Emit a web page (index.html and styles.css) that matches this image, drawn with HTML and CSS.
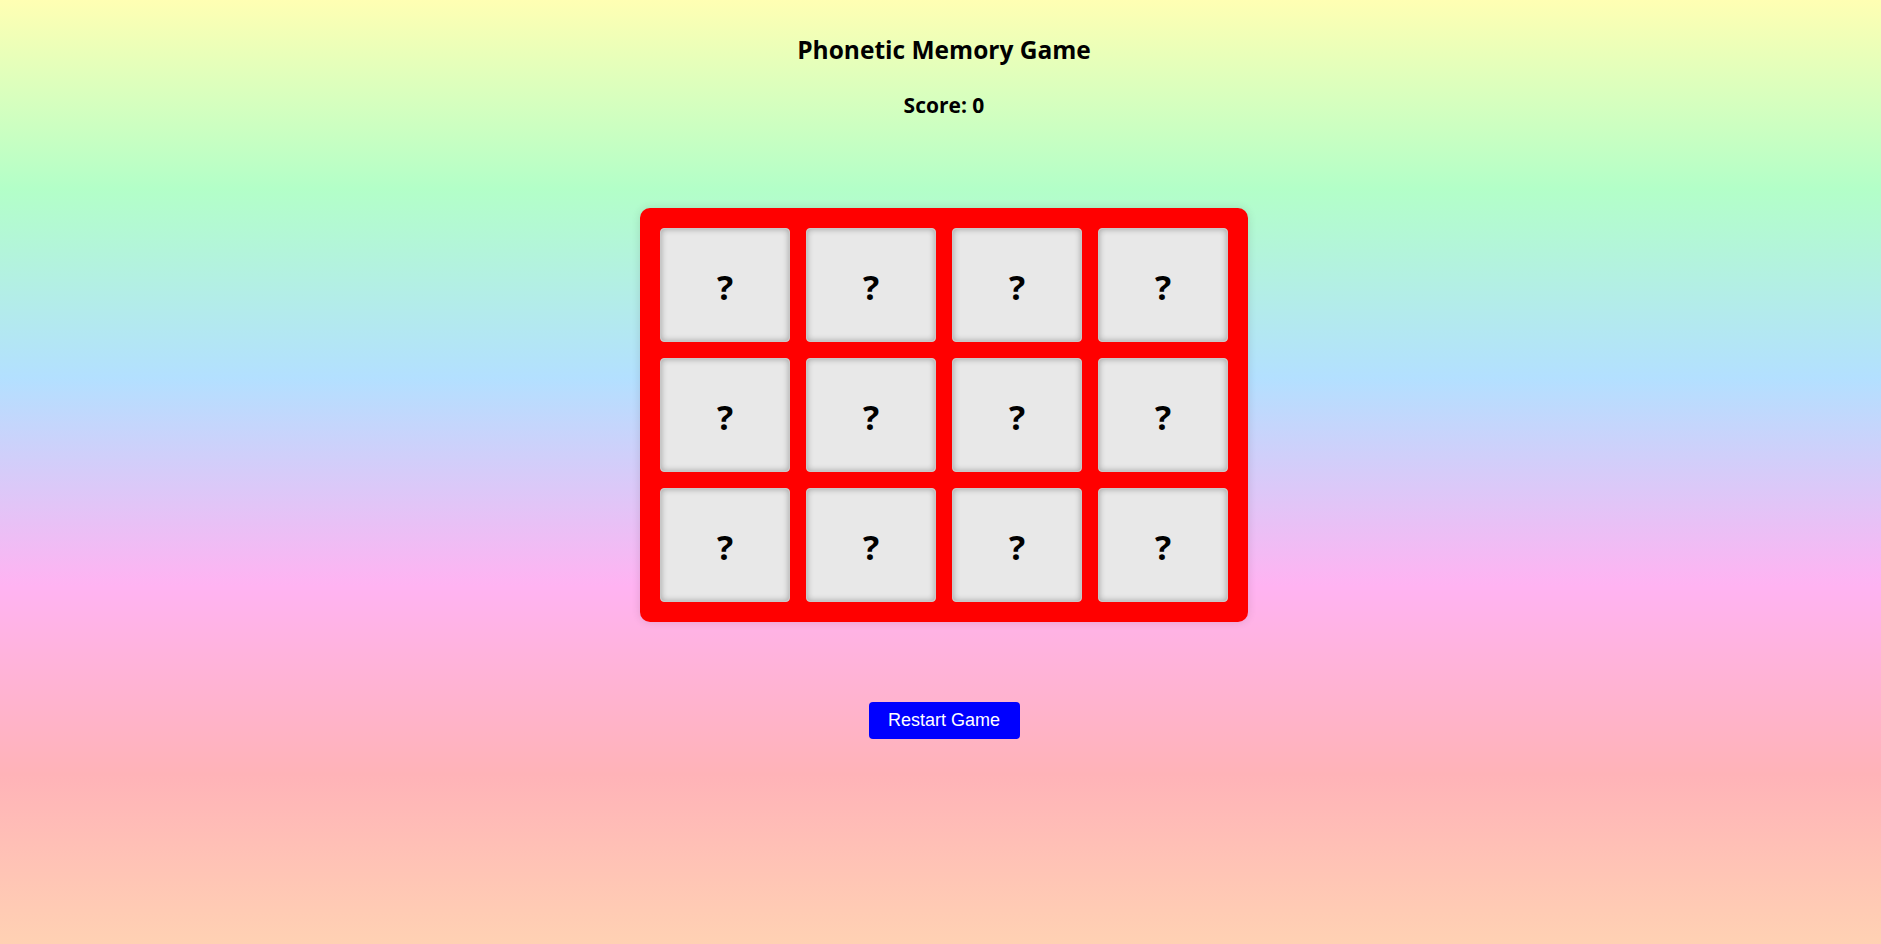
FILE: index.html
```html
<!DOCTYPE html>
<html lang="en">
<head>
<meta charset="utf-8">
<title>Phonetic Memory Game</title>
<link rel="stylesheet" href="styles.css">
</head>
<body>
<main class="game">
  <h1 class="title">Phonetic Memory Game</h1>
  <h2 class="score">Score: 0</h2>
  <div class="board">
    <div class="card">?</div>
    <div class="card">?</div>
    <div class="card">?</div>
    <div class="card">?</div>
    <div class="card">?</div>
    <div class="card">?</div>
    <div class="card">?</div>
    <div class="card">?</div>
    <div class="card">?</div>
    <div class="card">?</div>
    <div class="card">?</div>
    <div class="card">?</div>
  </div>
  <button class="restart" type="button">Restart Game</button>
</main>
</body>
</html>
```

FILE: styles.css
```css
html, body {
  margin: 0;
  padding: 0;
  height: 100%;
}

body {
  font-family: "Open Sans", "Noto Sans", sans-serif;
  color: #000;
  background: linear-gradient(to bottom, #ffffb3 0%, #b3ffc8 20%, #b3e0ff 40%, #ffb3f2 62%, #ffb3b8 82%, #ffd1b3 100%);
  overflow: hidden;
}

.game {
  display: flex;
  flex-direction: column;
  align-items: center;
  padding-left: 7px;
}

.title {
  margin: 34px 0 0;
  font-size: 24.5px;
  font-weight: 700;
  line-height: 32px;
}

.score {
  margin: 26px 0 0;
  font-size: 21px;
  font-weight: 700;
  line-height: 26px;
}

.board {
  margin-top: 90px;
  display: grid;
  grid-template-columns: repeat(4, 130px);
  grid-auto-rows: 114px;
  gap: 16px;
  padding: 20px;
  background: #ff0000;
  border-radius: 10px;
  box-shadow: 0 0 10px rgba(0, 0, 0, 0.12);
}

.card {
  display: flex;
  align-items: center;
  justify-content: center;
  padding-top: 4px;
  background: #e8e8e8;
  border: 1px solid #c8c8c8;
  border-radius: 4px;
  box-shadow: inset 0 0 6px rgba(0, 0, 0, 0.32);
  font-size: 34px;
  font-weight: 700;
  box-sizing: border-box;
}

.restart {
  margin-top: 80px;
  width: 151px;
  height: 37px;
  padding: 0;
  border: none;
  border-radius: 4px;
  background: #0000ff;
  color: #fff;
  font-family: "Liberation Sans", Arial, sans-serif;
  font-size: 18px;
  cursor: pointer;
}
```
